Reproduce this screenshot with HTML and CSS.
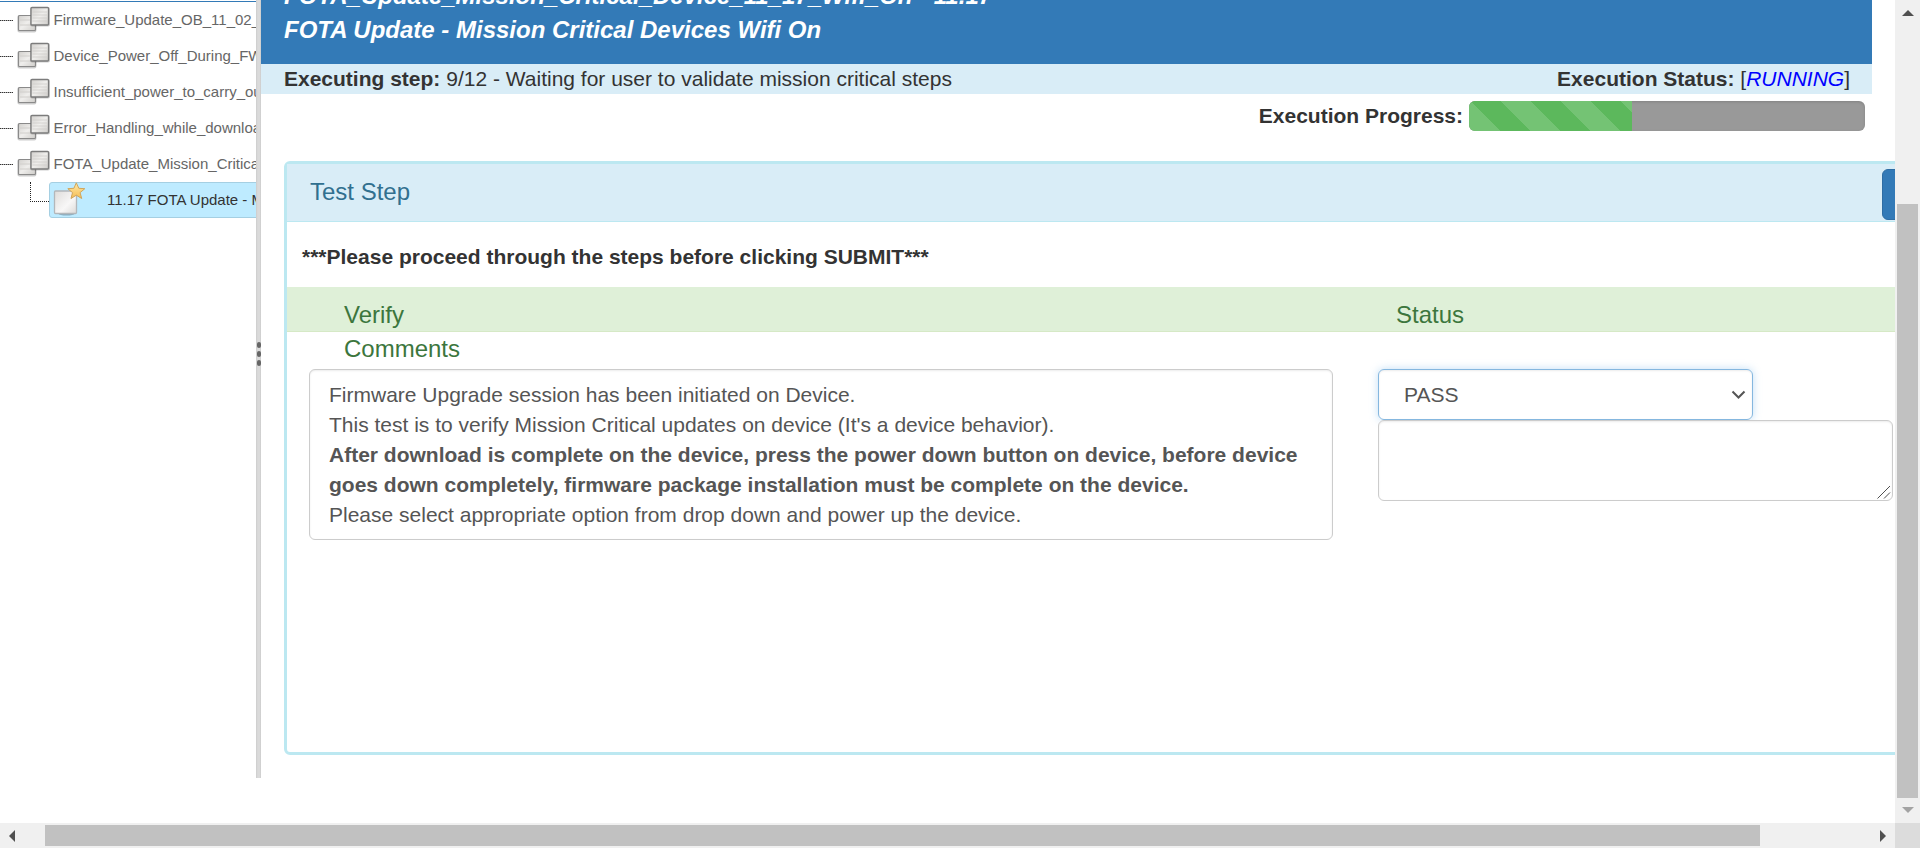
FILE: index.html
```html
<!DOCTYPE html>
<html lang="en">
<head>
<meta charset="utf-8">
<title>Test execution</title>
<link rel="stylesheet" href="styles.css">
</head>
<body>
<svg class="defs" width="0" height="0" aria-hidden="true">
  <defs>
    <linearGradient id="sheet" x1="0" y1="0" x2="1" y2="1">
      <stop offset="0" stop-color="#d2d0cd"/><stop offset=".5" stop-color="#efeeec"/><stop offset="1" stop-color="#cfcdca"/>
    </linearGradient>
    <linearGradient id="page" x1="0" y1="0" x2="1" y2="1">
      <stop offset="0" stop-color="#dedcda"/><stop offset=".6" stop-color="#f8f7f7"/><stop offset="1" stop-color="#dcdad8"/>
    </linearGradient>
    <linearGradient id="gold" x1="0" y1="0" x2="0" y2="1">
      <stop offset="0" stop-color="#ffe9a6"/><stop offset="1" stop-color="#f5bd55"/>
    </linearGradient>
    <symbol id="suite" viewBox="0 0 34 28">
      <rect x=".4" y="9" width="19" height="17.5" rx="2" fill="#000" opacity=".2"/>
      <rect x="1.5" y="9.500" width="17" height="15" rx="1" fill="url(#sheet)" stroke="#8a8a8a" stroke-width="1.2"/>
      <path d="M3 14h10M3 19h14" stroke="#d0cecb" fill="none"/>
      <rect x="13" y="1" width="20" height="19.500" rx="2" fill="#000" opacity=".2"/>
      <rect x="14" y="1.500" width="17.500" height="17.500" rx="1" fill="url(#sheet)" stroke="#7c7c7c" stroke-width="1.300"/>
      <path d="M15.500 6h14.500M15.500 9h14.500M15.500 12h14.500M15.500 15h14.500" stroke="#cfcdca" stroke-width=".8" fill="none"/>
    </symbol>
    <symbol id="case" viewBox="0 0 34 36">
      <ellipse cx="13.500" cy="31.800" rx="8" ry="1.700" fill="#557080" opacity=".5"/>
      <rect x="1.500" y="9" width="22" height="22.500" rx="1" fill="url(#page)" stroke="#b3b7ba" stroke-width="1.300"/>
      <path d="M23.300 .8l2.500 5.500 6 .4-4.700 3.900 1.600 5.900-5.400-3.300-5.300 3.300 1.500-5.900-4.700-3.900 6.100-.4z" fill="url(#gold)" stroke="#cfa55c"/>
    </symbol>
  </defs>
</svg>
<div class="window">
  <div class="viewport">
    <aside class="sidebar">
      <ul class="tree">
        <li class="node"><span class="dots"></span><svg class="suite-icon"><use href="#suite"/></svg><span class="label">Firmware_Update_OB_11_02_</span></li>
        <li class="node"><span class="dots"></span><svg class="suite-icon"><use href="#suite"/></svg><span class="label">Device_Power_Off_During_FW</span></li>
        <li class="node"><span class="dots"></span><svg class="suite-icon"><use href="#suite"/></svg><span class="label">Insufficient_power_to_carry_ou</span></li>
        <li class="node"><span class="dots"></span><svg class="suite-icon"><use href="#suite"/></svg><span class="label">Error_Handling_while_downloa</span></li>
        <li class="node"><span class="dots"></span><svg class="suite-icon"><use href="#suite"/></svg><span class="label">FOTA_Update_Mission_Critica</span></li>
        <li class="leaf"><span class="elbow"></span><a class="selected"><svg class="case-icon"><use href="#case"/></svg><span>11.17 FOTA Update - M</span></a></li>
      </ul>
    </aside>
    <div class="splitter"><i></i><i></i><i></i></div>
    <main class="main">
      <header class="title">
        <div>FOTA_Update_Mission_Critical_Device_11_17_Wifi_On - 11.17</div>
        <div>FOTA Update - Mission Critical Devices Wifi On</div>
      </header>
      <div class="status">
        <div><b>Executing step:</b> 9/12 - Waiting for user to validate mission critical steps</div>
        <div><b>Execution Status:</b> [<em>RUNNING</em>]</div>
      </div>
      <div class="progress-row">
        <b>Execution Progress:</b>
        <div class="progress"><div class="bar"></div></div>
      </div>
      <section class="panel">
        <div class="panel-heading"><h3>Test Step</h3><span class="submit"></span></div>
        <p class="notice">***Please proceed through the steps before clicking SUBMIT***</p>
        <div class="columns"><span class="verify">Verify</span><span>Status</span></div>
        <div class="comments">Comments</div>
        <div class="fields">
          <div class="instructions">
            <div>Firmware Upgrade session has been initiated on Device.</div>
            <div>This test is to verify Mission Critical updates on device (It's a device behavior).</div>
            <b>After download is complete on the device, press the power down button on device, before device<br>goes down completely, firmware package installation must be complete on the device.</b>
            <div>Please select appropriate option from drop down and power up the device.</div>
          </div>
          <div class="result">
            <div class="select"><span>PASS</span><svg width="15" height="10" viewBox="0 0 15 10"><path d="M1.500 1.500l6 6 6-6" fill="none" stroke="#555" stroke-width="2"/></svg></div>
            <div class="textarea"><svg width="14" height="14" viewBox="0 0 14 14"><path d="M.5 13.500l12.500-12.500M7 13.500l6-6" fill="none" stroke="#505050" stroke-width="1"/></svg></div>
          </div>
        </div>
      </section>
    </main>
  </div>
  <div class="vscroll">
    <svg class="up" width="12" height="6" viewBox="0 0 12 6"><path d="M0 6L6 0l6 6z" fill="#505050"/></svg>
    <div class="vthumb"></div>
    <svg class="down" width="12" height="6" viewBox="0 0 12 6"><path d="M0 0h12L6 6z" fill="#a3a3a3"/></svg>
  </div>
  <div class="hscroll">
    <svg class="left" width="6" height="12" viewBox="0 0 6 12"><path d="M6 0v12L0 6z" fill="#505050"/></svg>
    <div class="hthumb"></div>
    <svg class="right" width="6" height="12" viewBox="0 0 6 12"><path d="M0 0v12l6-6z" fill="#505050"/></svg>
  </div>
  <div class="corner"></div>
</div>
</body>
</html>
```
FILE: styles.css
```css
* { box-sizing: border-box; }
body {
  margin: 0;
  overflow: hidden;
  background: #fff;
  color: #333;
  font: 21px/30px "Liberation Sans", Arial, sans-serif;
  white-space: nowrap;
}
svg { display: block; flex: none; }
.defs { position: absolute; }

.window {
  display: grid;
  grid-template: 823px 25px / 1895px 25px;
  width: 1920px;
  height: 848px;
}
.viewport { display: flex; overflow: hidden; }

/* Tree */
.sidebar {
  flex: none;
  width: 256px;
  height: 778px;
  padding-top: 1px;
  overflow: hidden;
}
.tree {
  margin: 0;
  padding: 0;
  list-style: none;
  border-top: 1px solid #337ab7;
  font-size: 15px;
  line-height: 36px;
}
.node, .leaf { display: flex; align-items: center; height: 36px; }
.node { color: #666; }
.dots {
  flex: none;
  width: 13px;
  height: 1px;
  margin-top: 1px;
  background: repeating-linear-gradient(90deg, #333 0 1px, #aaa 1px 2px);
}
.suite-icon { width: 34px; height: 28px; margin: 0 3px 0 4px; }
.label { margin-left: -.5px; }
.elbow {
  flex: none;
  align-self: flex-start;
  width: 19px;
  height: 20px;
  margin: 0 0 0 30px;
  border-left: 1px dotted #222;
  border-bottom: 1px dotted #222;
}
.selected {
  display: flex;
  flex: none;
  width: 300px;
  height: 36px;
  border: 1px solid #a5cfe2;
  border-radius: 3px;
  background: #beebff;
  color: #333;
  line-height: 34px;
}
.case-icon { width: 34px; height: 36px; margin: -1px 20px 0 3px; }

.splitter {
  display: flex;
  flex: none;
  flex-direction: column;
  align-items: center;
  gap: 3px;
  width: 5px;
  height: 778px;
  padding-top: 342px;
  background: linear-gradient(90deg, #ccc, #dadada 35%, #dadada 70%, #ccc);
}
.splitter i { width: 4px; height: 6px; border-radius: 2px; background: #666; }

/* Main pane */
.main { flex: 1; min-width: 0; overflow: hidden; }
.title {
  display: flex;
  flex-direction: column;
  justify-content: flex-end;
  width: 1611px;
  height: 64px;
  padding: 0 23px 17px;
  overflow: hidden;
  background: #337ab7;
  color: #fff;
  font-size: 24px;
  font-weight: bold;
  font-style: italic;
  line-height: 34px;
}
.status {
  display: flex;
  justify-content: space-between;
  width: 1611px;
  padding: 0 22px 0 23px;
  background: #d9edf7;
}
.status em { color: #00f; }
.progress-row {
  display: flex;
  justify-content: flex-end;
  gap: 6px;
  width: 1604px;
  padding-top: 7px;
}
.progress {
  width: 396px;
  height: 30px;
  overflow: hidden;
  border-radius: 6px;
  background: #999;
  box-shadow: inset 0 1px 3px rgba(0, 0, 0, .15);
}
.bar {
  width: 163px;
  height: 30px;
  background: #5cb85c linear-gradient(45deg, rgba(255, 255, 255, .15) 25%, transparent 25%, transparent 50%, rgba(255, 255, 255, .15) 50%, rgba(255, 255, 255, .15) 75%, transparent 75%) 32px 0 / 60px 60px;
}

/* Step panel */
.panel {
  width: 1700px;
  height: 594px;
  margin: 30px 0 0 23px;
  border: 3px solid #bce8f1;
  border-radius: 6px;
}
.panel-heading {
  display: flex;
  justify-content: space-between;
  width: 1694px;
  height: 58px;
  padding: 5px 0 0 23px;
  border-bottom: 1px solid #bce8f1;
  background: #d9edf7;
}
h3 {
  margin: 10px 0 0;
  color: #31708f;
  font-size: 24px;
  font-weight: normal;
  line-height: 26px;
}
.submit {
  width: 99px;
  height: 51px;
  border: 1px solid #2e6da4;
  border-radius: 6px;
  background: #337ab7;
}
.notice { margin: 20px 0 15px 15px; font-weight: bold; }
.columns {
  display: flex;
  height: 45px;
  padding: 15px 0 0 57px;
  border-bottom: 1px solid #d6e9c6;
  background: #dff0d8;
  color: #3c763d;
  font-size: 24px;
  line-height: 26px;
}
.verify { width: 1052px; }
.comments {
  padding: 4px 0 0 57px;
  color: #3c763d;
  font-size: 24px;
  line-height: 26px;
}
.fields { display: flex; gap: 45px; margin: 7px 0 0 22px; color: #555; }
.instructions, .select, .textarea {
  border: 1px solid #ccc;
  border-radius: 6px;
  box-shadow: inset 0 1px 2px rgba(0, 0, 0, .08);
}
.instructions { width: 1024px; height: 171px; padding: 10px 19px; }
.select {
  display: flex;
  align-items: center;
  justify-content: space-between;
  width: 375px;
  height: 51px;
  padding: 0 6px 0 25px;
  border-color: #85b7df;
  box-shadow: inset 0 1px 2px rgba(0, 0, 0, .08), 0 0 8px rgba(102, 175, 233, .4);
}
.textarea {
  display: flex;
  align-items: flex-end;
  justify-content: flex-end;
  width: 515px;
  height: 81px;
  padding: 1px;
  background: #fff;
}

/* Scrollbars */
.vscroll {
  display: flex;
  flex-direction: column;
  align-items: center;
  background: #f0f0f0;
}
.up { margin-top: 10px; }
.vthumb { width: 21px; height: 594px; margin: 188px 0 9px; background: #c1c1c1; }
.hscroll { display: flex; align-items: center; background: #f0f0f0; }
.left { margin: 0 30px 0 9px; }
.hthumb { width: 1715px; height: 21px; background: #c1c1c1; }
.right { margin-left: 120px; }
.corner { background: #dcdcdc; }
```
